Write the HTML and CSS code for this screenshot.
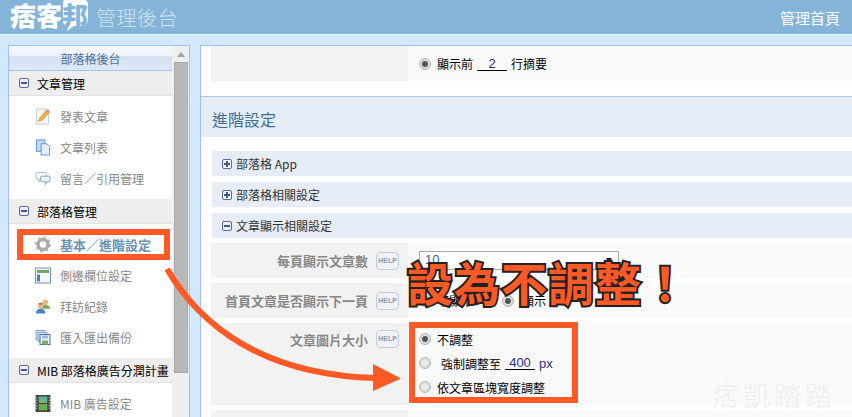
FILE: index.html
```html
<!DOCTYPE html>
<html lang="zh-Hant">
<head>
    <meta charset="UTF-8">
    <title>痞客邦 管理後台</title>
    <link rel="stylesheet" href="styles.css">
</head>
<body>
<div class="page">

    <!-- 上方標題列 -->
    <header class="topbar">
        <div class="logo">
            <svg class="logo-bubble" viewBox="0 0 26 32"><path d="M3 0H22Q26 0 26 5V19Q26 26 19 26H12L5 31L6 26Q1 26 1 20V3Q1 0 3 0Z" fill="#fff"/></svg>
            <span class="logo-text">痞客<span class="logo-last">邦</span></span>
        </div>
        <div class="logo-sub">管理後台</div>
        <a class="top-link">管理首頁</a>
    </header>

    <div class="layout">

        <!-- 側邊選單 -->
        <aside class="sidebar">
            <div class="side-list">
                <div class="side-title">部落格後台</div>

                <div class="side-head"><i class="toggle minus"></i>文章管理</div>
                <div class="side-item">
                    <svg class="ico" viewBox="0 0 16 18"><rect x="1" y="1" width="13" height="16" fill="#f6f6f6" stroke="#c8c8c8"/><path d="M3 14L5 10L12 2L15 4L7 13Z" fill="#eeb247" stroke="#c98a2a" stroke-width=".7"/><path d="M12 2L15 4L14 5.500L11 3.300Z" fill="#e9907a"/></svg>
                    發表文章
                </div>
                <div class="side-item">
                    <svg class="ico" viewBox="0 0 16 18"><rect x="1" y="1" width="9" height="12" fill="#c3d8f3" stroke="#5d8fd3"/><path d="M6 5H12L15 8V17H6Z" fill="#e3eefb" stroke="#5d8fd3"/></svg>
                    文章列表
                </div>
                <div class="side-item">
                    <svg class="ico" viewBox="0 0 17 17"><path d="M2 2H11Q12 2 12 3V8Q12 9 11 9H6L4 12V9H2Q1 9 1 8V3Q1 2 2 2Z" fill="#fff" stroke="#9db4cf"/><path d="M7 6H15Q16 6 16 7V11Q16 12 15 12H13L11 15V12H7Q6 12 6 11V7Q6 6 7 6Z" fill="#eef4fb" stroke="#7f9dc0"/></svg>
                    留言／引用管理
                </div>

                <div class="side-head"><i class="toggle minus"></i>部落格管理</div>
                <div class="side-item active">
                    <svg class="ico" viewBox="0 0 16 16"><circle cx="8" cy="8" r="5" fill="none" stroke="#a9a9a9" stroke-width="3.400"/><circle cx="8" cy="8" r="7" fill="none" stroke="#b4b4b4" stroke-width="2" stroke-dasharray="2.600 2.900"/></svg>
                    基本／進階設定
                </div>
                <div class="side-item">
                    <svg class="ico" viewBox="0 0 16 16"><rect x=".5" y=".5" width="15" height="15" fill="#f3f7fc" stroke="#6c94c6"/><rect x="2" y="2.500" width="12" height="3" fill="#6fa85f"/><rect x="2" y="7" width="3" height="7" fill="#4e80bd"/></svg>
                    側邊欄位設定
                </div>
                <div class="side-item">
                    <svg class="ico" viewBox="0 0 17 17"><circle cx="11" cy="4" r="3" fill="#e8b878"/><path d="M7 11Q7 7 11 7Q16 7 16 11Z" fill="#78a860"/><circle cx="6" cy="8" r="3" fill="#eeb38a"/><path d="M1 16Q1 11 6 11Q11 11 11 16Z" fill="#4a84c8"/><path d="M3 6Q6 3 9 6L6 6.500Z" fill="#b36a35"/></svg>
                    拜訪紀錄
                </div>
                <div class="side-item">
                    <svg class="ico" viewBox="0 0 16 16"><rect x="1" y="1" width="9" height="9" fill="#cfdff3" stroke="#88a8d0"/><rect x="3" y="3" width="9" height="9" fill="#dbe7f6" stroke="#88a8d0"/><rect x="5" y="5" width="10" height="10" fill="#eaf1fa" stroke="#3f6fb0"/><rect x="7" y="6" width="6" height="3" fill="#9cbbe0"/><rect x="7" y="11" width="6" height="4" fill="#7fae6a"/></svg>
                    匯入匯出備份
                </div>

                <div class="side-head"><i class="toggle minus"></i>MIB 部落格廣告分潤計畫</div>
                <div class="side-item">
                    <svg class="ico" viewBox="0 0 14 16"><rect x="0" y="0" width="14" height="16" fill="#44463f"/><rect x="3" y="1.500" width="8" height="6" fill="#5fb0a0"/><rect x="3" y="8.500" width="8" height="6" fill="#6cb04e"/><path d="M3 7L6 4L9 7Z" fill="#7ec24f"/><path d="M1 2V14M13 2V14" stroke="#cfcfcf" stroke-dasharray="1 1.500"/></svg>
                    MIB 廣告設定
                </div>
            </div>

            <div class="scrollbar">
                <div class="scroll-up"></div>
                <div class="scroll-thumb"></div>
            </div>
        </aside>

        <!-- 設定內容 -->
        <main class="content">
            <div class="form-row top-row">
                <div class="form-label"></div>
                <div class="form-value">
                    <label class="opt"><input type="radio" name="summary" checked>顯示前</label>
                    <span class="num-input num-small">2</span>
                    <span>行摘要</span>
                </div>
            </div>

            <h2 class="panel-title">進階設定</h2>

            <div class="fold"><i class="toggle plus"></i>部落格 App</div>
            <div class="fold"><i class="toggle plus"></i>部落格相關設定</div>
            <div class="fold"><i class="toggle minus"></i>文章顯示相關設定</div>

            <div class="form-row">
                <div class="form-label">每頁顯示文章數<span class="help">HELP</span></div>
                <div class="form-value">
                    <div class="fake-select">10<span class="caret"></span></div>
                </div>
            </div>

            <div class="form-row">
                <div class="form-label">首頁文章是否顯示下一頁<span class="help">HELP</span></div>
                <div class="form-value">
                    <label class="opt"><input type="radio" name="nextpage">不顯示</label>
                    <label class="opt opt-second"><input type="radio" name="nextpage" checked>顯示</label>
                </div>
            </div>

            <div class="form-row image-row">
                <div class="form-label">文章圖片大小<span class="help">HELP</span></div>
                <div class="form-value stack">
                    <label class="opt"><input type="radio" name="imgsize" checked>不調整</label>
                    <label class="opt opt-force"><input type="radio" name="imgsize"><span class="force-text">強制調整至</span><span class="num-input num-wide">400</span><span class="unit">px</span></label>
                    <label class="opt"><input type="radio" name="imgsize">依文章區塊寬度調整</label>
                </div>
            </div>

            <div class="form-row"><div class="form-label"></div><div class="form-value"></div></div>
        </main>
    </div>

    <!-- 教學標註 -->
    <div class="mark mark-menu"></div>
    <div class="mark mark-options"></div>
    <svg class="arrow" viewBox="0 0 852 417">
        <path d="M167 269C200 325 262 375 376 378" fill="none" stroke="#ff5a25" stroke-width="6"/>
        <path d="M373 364L401 378.500L373 391Z" fill="#ff5a25"/>
    </svg>
    <div class="callout">設為不調整！</div>
    <div class="watermark">痞凱踏踏</div>
</div>
</body>
</html>
```

FILE: styles.css
```css
* {
    margin: 0;
    padding: 0;
    box-sizing: border-box;
}

html, body {
    height: 100%;
    overflow: hidden;
}

body {
    font-family: "Noto Sans CJK TC", "Liberation Sans", sans-serif;
    font-size: 12px;
    color: #000;
}

.page {
    position: relative;
    width: 852px;
    height: 417px;
    overflow: hidden;
    background-color: #d2e8fd;
}

/* 標題列 */
.topbar {
    display: flex;
    align-items: center;
    height: 35px;
    padding: 0 12px 0 10px;
    background-color: #84b5d9;
    border-bottom: 1px solid #fff;
}

.logo {
    position: relative;
    width: 78px;
    height: 34px;
    margin-right: 8px;
}

.logo-text {
    position: relative;
    display: block;
    font-size: 26px;
    line-height: 30px;
    font-weight: 900;
    color: #fff;
    white-space: nowrap;
}

.logo-last {
    color: #84b5d9;
}

.logo-bubble {
    position: absolute;
    left: 52px;
    top: 0;
    width: 26px;
    height: 32px;
}

.logo-sub {
    font-size: 20px;
    font-weight: 300;
    letter-spacing: 0.5px;
    color: #cfe2ef;
}

.top-link {
    margin-left: auto;
    font-size: 15px;
    color: #fff;
}

/* 版面 */
.layout {
    display: flex;
    gap: 10px;
    padding: 10px 0 0 8px;
}

/* 側邊選單 */
.sidebar {
    display: flex;
    flex: none;
    width: 182px;
    height: 372px;
    background-color: #efefef;
    border: 1px solid #a0c0ee;
    border-bottom: 0;
    overflow: hidden;
}

.side-list {
    width: 163px;
    flex: none;
    background-color: #fff;
}

.side-title {
    height: 25px;
    line-height: 25px;
    text-align: center;
    color: #4a7199;
    background: linear-gradient(#f6f9fd, #ecf2fa 40%, #d3e1f3 45%, #dde8f6);
    border-bottom: 1px solid #a5c6ee;
}

.side-head {
    display: flex;
    align-items: center;
    height: 25px;
    padding-left: 10px;
    background-color: #eeeeee;
    border-bottom: 1px solid #e2e2e2;
    white-space: nowrap;
}

.side-head .toggle {
    margin-right: 8px;
}

.side-item {
    display: flex;
    align-items: center;
    height: 31px;
    padding-left: 26px;
    color: #888;
}

.side-item .ico {
    flex: none;
    width: 16px;
    height: 17px;
    margin-right: 9px;
}

.side-item.active {
    font-size: 13px;
    font-weight: bold;
    color: #6a93b5;
}

.side-head + .side-item {
    margin-top: 5px;
}

.side-item + .side-head {
    margin-top: 5px;
}

.scrollbar {
    flex: 1;
    padding: 0 1px 0 2px;
}

.scroll-up {
    width: 0;
    height: 0;
    margin: 6px auto 5px;
    border-left: 4px solid transparent;
    border-right: 4px solid transparent;
    border-bottom: 5px solid #a3a3a3;
}

.scroll-thumb {
    height: 311px;
    background-color: #b8b8b8;
    border: 1px solid #a8a8a8;
}

/* 展開/收合圖示 */
.toggle {
    position: relative;
    display: inline-block;
    flex: none;
    width: 10px;
    height: 10px;
    background-color: #eef1f8;
    border: 1px solid #5a6a9c;
    border-radius: 2px;
}

.toggle::before {
    content: "";
    position: absolute;
    left: 1px;
    top: 3px;
    width: 6px;
    height: 2px;
    background-color: #45558c;
}

.toggle.plus::after {
    content: "";
    position: absolute;
    left: 3px;
    top: 1px;
    width: 2px;
    height: 6px;
    background-color: #45558c;
}

/* 內容區 */
.content {
    flex: 1;
    height: 372px;
    background-color: #fff;
    border-left: 1px solid #a0c0ee;
    border-top: 1px solid #a0c0ee;
    overflow: hidden;
}

.panel-title {
    height: 41px;
    margin-top: 15px;
    padding-left: 11px;
    font-size: 16px;
    font-weight: normal;
    line-height: 44px;
    color: #3f6f96;
    background-color: #e6edf7;
    border-top: 1px solid #a9c8ee;
}

.fold {
    display: flex;
    align-items: center;
    height: 25px;
    margin: 0 0 6px 11px;
    padding-left: 10px;
    background-color: #e6edf7;
    color: #333;
}

.panel-title + .fold {
    margin-top: 14px;
}

.fold .toggle {
    margin-right: 4px;
}

.form-row {
    display: flex;
    height: 35px;
    margin: 0 0 5px 10px;
}

.fold + .form-row {
    margin-top: -1px;
}

.top-row {
    margin-bottom: 0;
}

.image-row {
    height: 82px;
}

.form-label {
    display: flex;
    justify-content: flex-end;
    align-items: center;
    flex: none;
    width: 197px;
    padding-right: 9px;
    font-size: 13px;
    font-weight: bold;
    color: #888;
    background-color: #f2f2f2;
}

.image-row .form-label {
    align-items: flex-start;
    padding-top: 7px;
}

.form-value {
    display: flex;
    align-items: center;
    flex: 1;
    padding-left: 11px;
    background-color: #fafafa;
}

.form-value.stack {
    flex-direction: column;
    align-items: flex-start;
    padding-top: 4px;
}

.help {
    flex: none;
    width: 23px;
    height: 18px;
    margin-left: 8px;
    font-size: 7px;
    font-weight: bold;
    line-height: 15px;
    text-align: center;
    color: #8d9aa8;
    background-color: #eef2f8;
    border: 1.500px solid #c5ccd6;
    border-radius: 4px;
    font-family: "Liberation Sans", sans-serif;
}

.opt {
    display: flex;
    align-items: center;
    height: 24px;
    white-space: nowrap;
}

.opt input {
    flex: none;
    appearance: none;
    position: relative;
    width: 12px;
    height: 12px;
    margin-right: 6px;
    background: radial-gradient(#f2f2f2, #d0d0d0);
    border: 1px solid #b5b5b5;
    border-radius: 50%;
}

.opt input:checked::after {
    content: "";
    position: absolute;
    left: 2px;
    top: 2px;
    width: 6px;
    height: 6px;
    background-color: #555;
    border-radius: 50%;
}

.opt-second {
    margin-left: 29px;
}

.opt-second input {
    margin-right: 8px;
}

.force-text {
    margin-left: 4px;
}

.num-input {
    display: inline-block;
    height: 14px;
    margin: 0 4px;
    font-size: 13px;
    line-height: 13px;
    text-align: center;
    color: #2b2b8c;
    border-bottom: 1px solid #000;
    font-family: "Liberation Sans", sans-serif;
}

.num-small {
    width: 30px;
}

.num-wide {
    width: 30px;
}

.unit {
    font-family: "Liberation Sans", sans-serif;
    font-size: 13px;
    color: #2b2b8c;
}

.fake-select {
    position: relative;
    width: 200px;
    height: 19px;
    padding-left: 5px;
    font-family: "Liberation Sans", sans-serif;
    font-size: 13px;
    line-height: 15px;
    color: #2a5fb0;
    background-color: #fff;
    border: 1px solid #a8a8a8;
}

.caret {
    position: absolute;
    right: 6px;
    top: 6px;
    border-left: 3px solid transparent;
    border-right: 3px solid transparent;
    border-top: 6px solid #222;
}

/* 教學標註 */
.mark {
    position: absolute;
    border: 6px solid #ff5a25;
}

.mark-menu {
    left: 17px;
    top: 229px;
    width: 153px;
    height: 31px;
}

.mark-options {
    left: 409px;
    top: 322px;
    width: 169px;
    height: 81px;
}

.arrow {
    position: absolute;
    left: 0;
    top: 0;
    width: 852px;
    height: 417px;
}

.callout {
    position: absolute;
    left: 407px;
    top: 247px;
    font-size: 46px;
    font-weight: 700;
    line-height: 68px;
    letter-spacing: 1px;
    color: #ff5a25;
    white-space: nowrap;
    -webkit-text-stroke: 4px #222;
    paint-order: stroke fill;
}

.watermark {
    position: absolute;
    left: 712px;
    top: 379px;
    font-size: 27px;
    font-weight: 300;
    line-height: 32px;
    letter-spacing: 4px;
    color: #eeeeee;
    white-space: nowrap;
}
```
